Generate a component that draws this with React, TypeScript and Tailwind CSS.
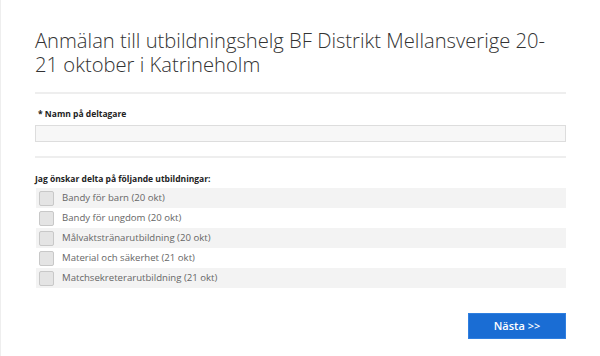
const courses = [
  'Bandy för barn (20 okt)',
  'Bandy för ungdom (20 okt)',
  'Målvaktstränarutbildning (20 okt)',
  'Material och säkerhet (21 okt)',
  'Matchsekreterarutbildning (21 okt)',
];

export default function App() {
  return (
    <div className="w-[600px] h-[356px] bg-white border-l border-[#eeeeee] font-['Open_Sans',sans-serif] text-[#333]">
      <div className="mx-[34px] pt-[28px]">
        <h1 className="text-[20.2px] leading-[24px] font-light text-[#333] pb-[16px] border-b-2 border-[#eeeeee]">
          Anmälan till utbildningshelg BF Distrikt Mellansverige 20-21 oktober i Katrineholm
        </h1>

        <div className="pt-[12px] pb-[14px] border-b-2 border-[#eeeeee]">
          <label className="block pl-[3px] text-[8.5px] font-bold leading-[16px] text-[#222]">
            * Namn på deltagare
          </label>
          <input
            type="text"
            className="mt-[3px] block w-full h-[17px] bg-[#f7f7f7] border border-[#dddddd] outline-none"
          />
        </div>

        <div className="pt-[14px]">
          <div className="text-[8.5px] font-bold leading-[14px] text-[#222]">
            Jag önskar delta på följande utbildningar:
          </div>
          <div className="mt-[2px] flex flex-col">
            {courses.map((c, i) => (
              <div
                key={c}
                className={
                  'flex items-center h-[20px] pl-[3px] ml-[1px] ' +
                  (i % 2 === 0 ? 'bg-[#f3f3f3]' : 'bg-white')
                }
              >
                <span className="w-[15px] h-[15px] rounded-[2px] bg-[#e4e4e4] border border-[#c8c8c8]" />
                <span className="ml-[8px] text-[9.6px] leading-none text-[#666]">{c}</span>
              </div>
            ))}
          </div>
        </div>

        <div className="flex justify-end mt-[25px]">
          <button className="w-[98px] h-[26px] bg-[#1a6dd4] border border-[#2f7fe0] text-white text-[11px] font-semibold">
            Nästa &gt;&gt;
          </button>
        </div>
      </div>
    </div>
  );
}
